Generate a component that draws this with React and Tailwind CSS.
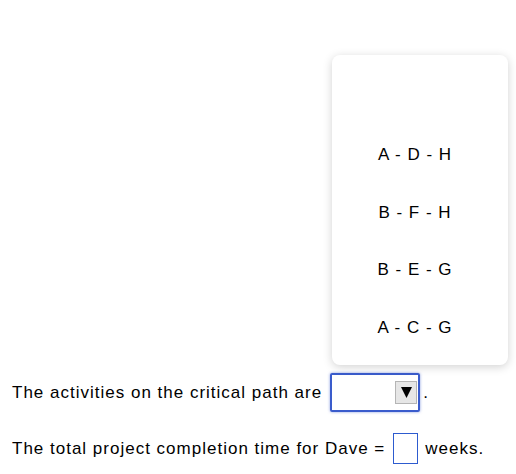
import React from 'react'

const options = ['A - D - H', 'B - F - H', 'B - E - G', 'A - C - G']

export default function App() {
  return (
    <div className="relative w-[516px] h-[474px] bg-white text-black text-[17px] tracking-[1px]" style={{ fontFamily: '"Liberation Sans", Arial, sans-serif' }}>
      {/* Question rows */}
      <div className="pl-[12px] pt-[373px]">
        <div className="flex items-center h-[39px]">
          <span>The activities on the critical path are</span>
          <div className="ml-[8px] w-[90px] h-[39px] border-2 border-[#3a5ccc] rounded-[2px] shadow-[0_0_3px_rgba(58,92,204,0.6)] flex items-center justify-end pr-[1px]">
            <div className="w-[22px] h-[23px] bg-[#e6e6e6] border border-[#b5b5b5] flex items-center justify-center">
              <svg width="11" height="11" viewBox="0 0 11 11">
                <polygon points="0,0 11,0 5.5,11" fill="#000" />
              </svg>
            </div>
          </div>
          <span className="ml-[3px]">.</span>
        </div>
        <div className="flex items-center h-[31px] mt-[21px]">
          <span>The total project completion time for Dave =</span>
          <div className="ml-[8px] w-[25px] h-[31px] border border-[#2d5bcf]" />
          <span className="ml-[7px]">weeks.</span>
        </div>
      </div>

      {/* Dropdown menu */}
      <div className="absolute left-[332px] top-[55px] w-[176px] h-[310px] bg-white rounded-[8px] shadow-[0_2px_10px_rgba(0,0,0,0.18)] pt-[71px] pr-[10px]">
        {options.map((o) => (
          <div key={o} className="h-[57.5px] flex items-center justify-center">
            {o}
          </div>
        ))}
      </div>
    </div>
  )
}
